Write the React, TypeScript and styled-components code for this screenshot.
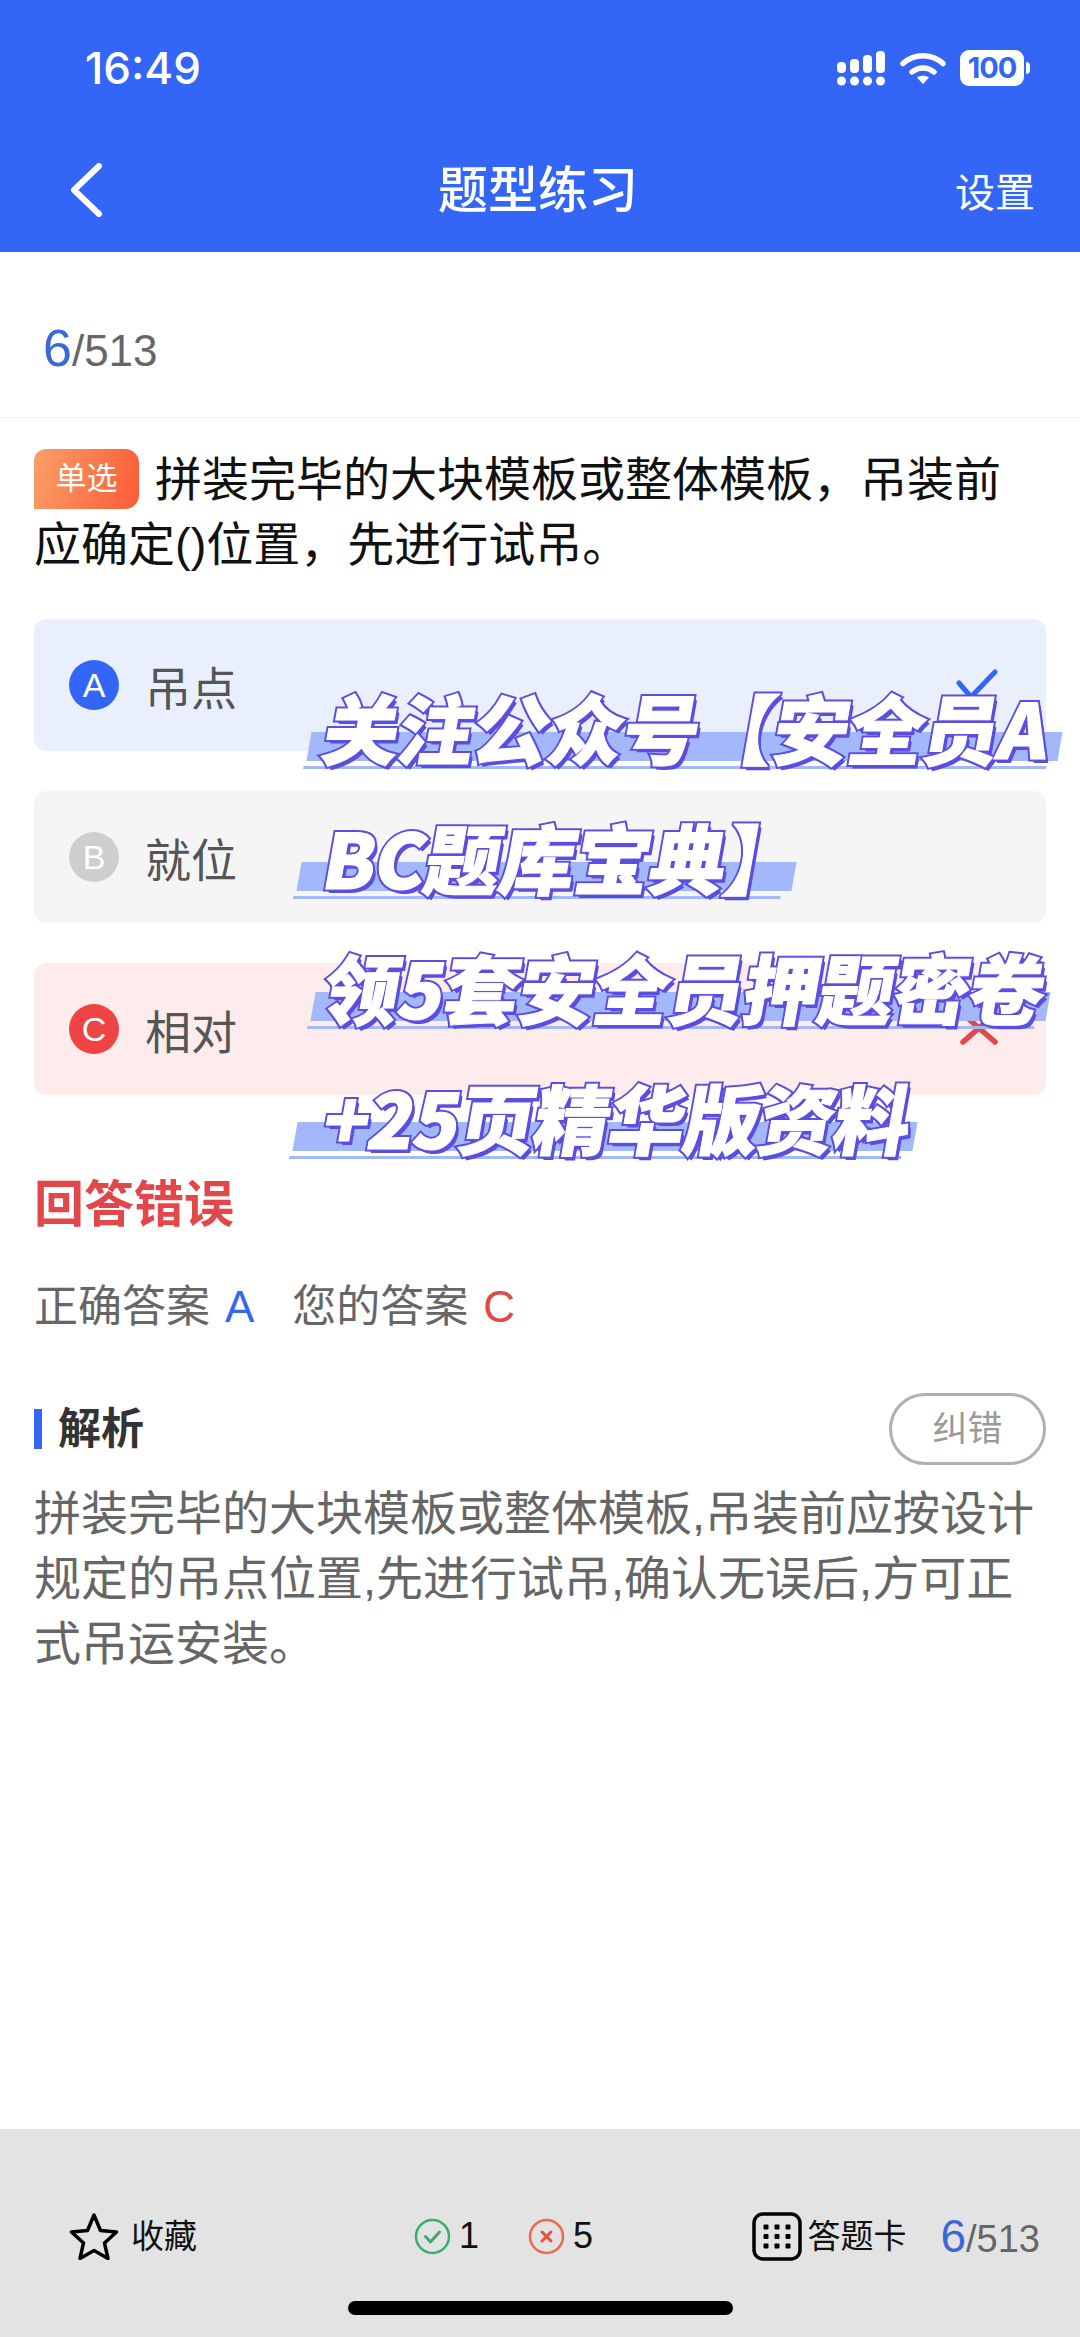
import React from 'react';
import styled, { createGlobalStyle } from 'styled-components';

const SANS = `"Liberation Sans", "Noto Sans CJK SC", sans-serif`;
const BLUE = '#3366f6';
const RED = '#e2474a';
const PURPLE = '#5b4ee0';

const GlobalStyle = createGlobalStyle`
  html, body {
    margin: 0;
    padding: 0;
    background: #fff;
  }
  body {
    font-family: ${SANS};
  }
`;

const StatusIcons: React.FC = () => (
  <IconRow>
    <svg width="50" height="36" viewBox="0 0 50 36" fill="#fff">
      <rect x="1" y="12" width="9" height="11" rx="4" />
      <rect x="14" y="9" width="9" height="14" rx="4" />
      <rect x="27" y="5" width="9" height="18" rx="4" />
      <rect x="40" y="1" width="9" height="22" rx="4" />
      <circle cx="5.500" cy="31" r="4.500" />
      <circle cx="18.500" cy="31" r="4.500" />
      <circle cx="31.500" cy="31" r="4.500" />
      <circle cx="44.500" cy="31" r="4.500" />
    </svg>
    <svg width="46" height="34" viewBox="0 0 46 34" fill="none" stroke="#fff" strokeLinecap="round">
      <path d="M3 12.500C14 2 32 2 43 12.500" strokeWidth="5.500" />
      <path d="M12 21c6.500-5.500 15.500-5.500 22 0" strokeWidth="5.500" />
      <path d="M17 26.500c3.500-2.500 8.500-2.500 12 0L23 33z" fill="#fff" stroke="none" />
    </svg>
    <Battery>
      <BatteryBody>100</BatteryBody>
      <BatteryTip />
    </Battery>
  </IconRow>
);

const CheckCircle: React.FC = () => (
  <svg width="37" height="37" viewBox="0 0 37 37" fill="none">
    <circle cx="18.500" cy="18.500" r="16.500" stroke="#3cae6c" strokeWidth="2.500" />
    <path d="M11.500 18.500l5 5.500 9-10" stroke="#3cae6c" strokeWidth="3" strokeLinecap="round" strokeLinejoin="round" />
  </svg>
);

const CrossCircle: React.FC = () => (
  <svg width="37" height="37" viewBox="0 0 37 37" fill="none">
    <circle cx="18.500" cy="18.500" r="16.500" stroke="#ea6a4a" strokeWidth="2.500" />
    <path d="M14 14l9 9M23 14l-9 9" stroke="#e8503a" strokeWidth="3" strokeLinecap="round" />
  </svg>
);

const watermark = [
  { text: '关注公众号【安全员A', left: -16, right: -11 },
  { text: 'BC题库宝典】', left: -26, right: 8 },
  { text: '领5套安全员押题密卷', left: -12, right: -3 },
  { text: '+25页精华版资料', left: -30, right: -4 },
];

const App: React.FC = () => (
  <React.Fragment>
    <GlobalStyle />
    <Page>
      <Header>
        <StatusBar>
          <Time>16:49</Time>
          <StatusIcons />
        </StatusBar>
        <Nav>
          <BackIcon width="36" height="54" viewBox="0 0 36 54" fill="none">
            <path d="M31 3L6 27l25 24" stroke="#fff" strokeWidth="6" strokeLinecap="round" strokeLinejoin="round" />
          </BackIcon>
          <Title>题型练习</Title>
          <NavAction>设置</NavAction>
        </Nav>
      </Header>

      <Counter>
        <CounterCurrent>6</CounterCurrent>
        <CounterTotal>/513</CounterTotal>
      </Counter>

      <Body>
        <Question>
          <TypeBadge>单选</TypeBadge>
          拼装完毕的大块模板或整体模板，吊装前应确定()位置，先进行试吊。
        </Question>

        <Options>
          <Option $tone="right">
            <OptionLetter $tone="right">A</OptionLetter>
            <OptionText>吊点</OptionText>
            <OptionMark width="44" height="32" viewBox="0 0 44 32" fill="none">
              <path d="M4 14l12 14L40 3" stroke={BLUE} strokeWidth="5" strokeLinecap="round" strokeLinejoin="round" />
            </OptionMark>
          </Option>
          <Option $tone="plain">
            <OptionLetter $tone="plain">B</OptionLetter>
            <OptionText>就位</OptionText>
          </Option>
          <Option $tone="wrong">
            <OptionLetter $tone="wrong">C</OptionLetter>
            <OptionText>相对</OptionText>
            <OptionMark width="40" height="34" viewBox="0 0 40 34" fill="none">
              <path d="M4 30L36 2M4 2l32 28" stroke={RED} strokeWidth="5.500" strokeLinecap="round" />
            </OptionMark>
          </Option>
        </Options>

        <Verdict>回答错误</Verdict>
        <Answers>
          <span>正确答案</span>
          <AnswerLetter $color={BLUE}>A</AnswerLetter>
          <span>您的答案</span>
          <AnswerLetter $color={RED}>C</AnswerLetter>
        </Answers>

        <AnalysisHead>
          <AnalysisTitle>解析</AnalysisTitle>
          <ReportButton>纠错</ReportButton>
        </AnalysisHead>
        <AnalysisText>
          拼装完毕的大块模板或整体模板,吊装前应按设计规定的吊点位置,先进行试吊,确认无误后,方可正式吊运安装。
        </AnalysisText>
      </Body>

      <Footer>
        <FooterRow>
          <FooterItem $gap={12}>
            <svg width="50" height="48" viewBox="0 0 50 48" fill="none">
              <path
                d="M25 3l6.500 15.500 16 1.500-12 11 3.500 15.500L25 38.500 11 46.500l3.500-15.500-12-11 16-1.500z"
                stroke="#000"
                strokeWidth="3.500"
                strokeLinejoin="round"
              />
            </svg>
            <FooterLabel>收藏</FooterLabel>
          </FooterItem>
          <Score>
            <ScoreItem>
              <CheckCircle />
              <ScoreValue>1</ScoreValue>
            </ScoreItem>
            <ScoreItem>
              <CrossCircle />
              <ScoreValue>5</ScoreValue>
            </ScoreItem>
          </Score>
          <CardSide>
            <FooterItem $gap={5}>
              <svg width="50" height="49" viewBox="0 0 50 49" fill="#000">
                <rect x="2" y="2" width="46" height="45" rx="9" fill="none" stroke="#000" strokeWidth="3.500" />
                {[14, 25, 36].map((x) =>
                  [15, 24.5, 34].map((y) => <rect key={`${x}-${y}`} x={x - 2.5} y={y - 2.5} width="5" height="5" rx="1" />),
                )}
              </svg>
              <FooterLabel>答题卡</FooterLabel>
            </FooterItem>
            <FooterCounter>
              <FooterCurrent>6</FooterCurrent>
              <FooterTotal>/513</FooterTotal>
            </FooterCounter>
          </CardSide>
        </FooterRow>
        <HomeIndicator />
      </Footer>

      <Watermark>
        {watermark.map((line) => (
          <WatermarkLine key={line.text}>
            <WatermarkBand $left={line.left} $right={line.right} />
            <WatermarkText data-text={line.text}>{line.text}</WatermarkText>
          </WatermarkLine>
        ))}
      </Watermark>
    </Page>
  </React.Fragment>
);

type Tone = 'right' | 'plain' | 'wrong';

const optionBg: Record<Tone, string> = { right: '#e9effd', plain: '#f5f5f5', wrong: '#fdeceb' };
const letterBg: Record<Tone, string> = { right: BLUE, plain: '#cfcfcf', wrong: '#ee4444' };

const Page = styled.div`
  position: relative;
  width: 1080px;
  height: 2337px;
  display: flex;
  flex-direction: column;
  overflow: hidden;
  background: #fff;
`;

const Header = styled.header`
  height: 252px;
  background: ${BLUE};
  color: #fff;
  display: flex;
  flex-direction: column;
`;

const StatusBar = styled.div`
  height: 136px;
  flex: none;
  padding: 0 50px 0 85px;
  margin-bottom: -8px;
  display: flex;
  align-items: center;
  justify-content: space-between;
`;

const Time = styled.div`
  font-family: Inter, sans-serif;
  font-size: 44px;
  font-weight: 500;
`;

const IconRow = styled.div`
  display: flex;
  align-items: center;
  gap: 14px;
`;

const Battery = styled.div`
  display: flex;
  align-items: center;
  gap: 2px;
`;

const BatteryBody = styled.div`
  width: 64px;
  height: 36px;
  border-radius: 9px;
  background: #fff;
  color: ${BLUE};
  font-family: Inter, sans-serif;
  font-size: 29px;
  font-weight: 700;
  letter-spacing: -1px;
  line-height: 36px;
  text-align: center;
`;

const BatteryTip = styled.div`
  width: 4px;
  height: 12px;
  border-radius: 0 4px 4px 0;
  background: #fff;
`;

const Nav = styled.nav`
  flex: 1;
  padding: 0 45px 8px;
  display: grid;
  grid-template-columns: 1fr auto 1fr;
  align-items: center;
`;

const BackIcon = styled.svg`
  display: block;
  margin-left: 23px;
  margin-top: 8px;
`;

const Title = styled.h1`
  margin: 0 0 0 -4px;
  font-size: 50px;
  font-weight: 500;
`;

const NavAction = styled.div`
  justify-self: end;
  font-size: 40px;
  margin-top: 8px;
`;

const Counter = styled.div`
  height: 166px;
  flex: none;
  box-sizing: border-box;
  padding: 26px 0 0 43px;
  display: flex;
  align-items: center;
  border-bottom: 1px solid #f3f3f3;
`;

const CounterCurrent = styled.span`
  color: #3a68dc;
  font-size: 52px;
`;

const CounterTotal = styled.span`
  color: #666;
  font-size: 44px;
  margin-top: 7px;
`;

const Body = styled.main`
  flex: 1;
  padding: 29px 34px 0;
`;

const Question = styled.div`
  color: #111;
  font-size: 47px;
  line-height: 65px;
`;

const TypeBadge = styled.span`
  display: inline-flex;
  align-items: center;
  justify-content: center;
  width: 105px;
  height: 60px;
  margin-right: 16px;
  border-radius: 12px 14px 14px 0;
  background: linear-gradient(105deg, #fb9f68, #fb5b36);
  color: #fff;
  font-size: 31px;
  line-height: 60px;
  vertical-align: 7px;
`;

const Options = styled.div`
  margin-top: 42px;
  display: flex;
  flex-direction: column;
  gap: 40px;
`;

const Option = styled.div<{ $tone: Tone }>`
  position: relative;
  height: 132px;
  padding: 0 35px;
  display: flex;
  align-items: center;
  gap: 26px;
  border-radius: 12px;
  background: ${(p) => optionBg[p.$tone]};
`;

const OptionLetter = styled.span<{ $tone: Tone }>`
  width: 50px;
  height: 50px;
  border-radius: 50%;
  background: ${(p) => letterBg[p.$tone]};
  color: #fff;
  font-size: 34px;
  line-height: 50px;
  text-align: center;
`;

const OptionText = styled.span`
  color: #555;
  font-size: 46px;
`;

const OptionMark = styled.svg`
  margin-left: auto;
  margin-right: 12px;
`;

const Verdict = styled.div`
  margin-top: 80px;
  color: ${RED};
  font-size: 50px;
  font-weight: 700;
  line-height: 60px;
`;

const Answers = styled.div`
  margin-top: 42px;
  display: flex;
  align-items: center;
  color: #666;
  font-size: 44px;
  line-height: 60px;
`;

const AnswerLetter = styled.span<{ $color: string }>`
  color: ${(p) => p.$color};
  margin: 0 38px 0 15px;
`;

const AnalysisHead = styled.div`
  margin-top: 56px;
  display: flex;
  align-items: center;
  justify-content: space-between;
`;

const AnalysisTitle = styled.h2`
  margin: 0;
  height: 40px;
  padding-left: 16px;
  border-left: 8px solid ${BLUE};
  color: #333;
  font-size: 43px;
  font-weight: 700;
  line-height: 40px;
`;

const ReportButton = styled.div`
  box-sizing: border-box;
  width: 157px;
  height: 72px;
  border: 3px solid #b0b0b0;
  border-radius: 36px;
  color: #999;
  font-size: 35px;
  line-height: 66px;
  text-align: center;
`;

const AnalysisText = styled.p`
  margin: 16px 0 0;
  color: #666;
  font-size: 47px;
  line-height: 65px;
`;

const Footer = styled.footer`
  height: 208px;
  flex: none;
  background: #e3e3e3;
  position: relative;
`;

const FooterRow = styled.div`
  padding: 80px 40px 0 69px;
  display: flex;
  align-items: center;
`;

const FooterItem = styled.div<{ $gap: number }>`
  display: flex;
  align-items: center;
  gap: ${(p) => p.$gap}px;
`;

const FooterLabel = styled.span`
  color: #111;
  font-size: 33px;
  margin-bottom: 5px;
`;

const Score = styled.div`
  margin-left: 217px;
  display: flex;
  align-items: center;
  gap: 49px;
`;

const ScoreItem = styled.div`
  display: flex;
  align-items: center;
  gap: 8px;
`;

const ScoreValue = styled.span`
  color: #111;
  font-size: 36px;
`;

const CardSide = styled.div`
  margin-left: auto;
  display: flex;
  align-items: center;
  gap: 34px;
`;

const FooterCounter = styled.div`
  display: flex;
  align-items: baseline;
`;

const FooterCurrent = styled.span`
  color: #3a68dc;
  font-size: 46px;
`;

const FooterTotal = styled.span`
  color: #666;
  font-size: 38px;
`;

const HomeIndicator = styled.div`
  position: absolute;
  left: 348px;
  bottom: 22px;
  width: 385px;
  height: 14px;
  border-radius: 7px;
  background: #000;
`;

const Watermark = styled.div`
  position: absolute;
  left: 325px;
  top: 671px;
  display: flex;
  flex-direction: column;
  align-items: flex-start;
  gap: 20px;
`;

const WatermarkLine = styled.div`
  position: relative;
  height: 110px;
  display: flex;
  align-items: center;
`;

const WatermarkBand = styled.div<{ $left: number; $right: number }>`
  position: absolute;
  left: ${(p) => p.$left}px;
  right: ${(p) => p.$right}px;
  top: 61px;
  height: 29px;
  background: #a3b8fa;
  transform: skewX(-10deg);

  &::after {
    content: '';
    position: absolute;
    left: -2px;
    right: 10px;
    bottom: -8px;
    height: 3px;
    background: #a3b8fa;
  }
`;

const WatermarkText = styled.div`
  position: relative;
  isolation: isolate;
  font-family: "Noto Sans CJK SC", sans-serif;
  font-size: 76px;
  font-weight: 900;
  letter-spacing: -1px;
  line-height: 110px;
  white-space: nowrap;
  color: #fff;
  transform: skewX(-10deg);
  -webkit-text-stroke: 1px #fff;

  &::before {
    content: attr(data-text);
    position: absolute;
    left: 0;
    top: 0;
    z-index: -1;
    -webkit-text-stroke: 5px ${PURPLE};
    text-shadow: 1px 1px 0 ${PURPLE}, 2px 2px 0 ${PURPLE}, 3px 3px 0 ${PURPLE}, 4px 4px 0 ${PURPLE};
  }
`;

export default App;
